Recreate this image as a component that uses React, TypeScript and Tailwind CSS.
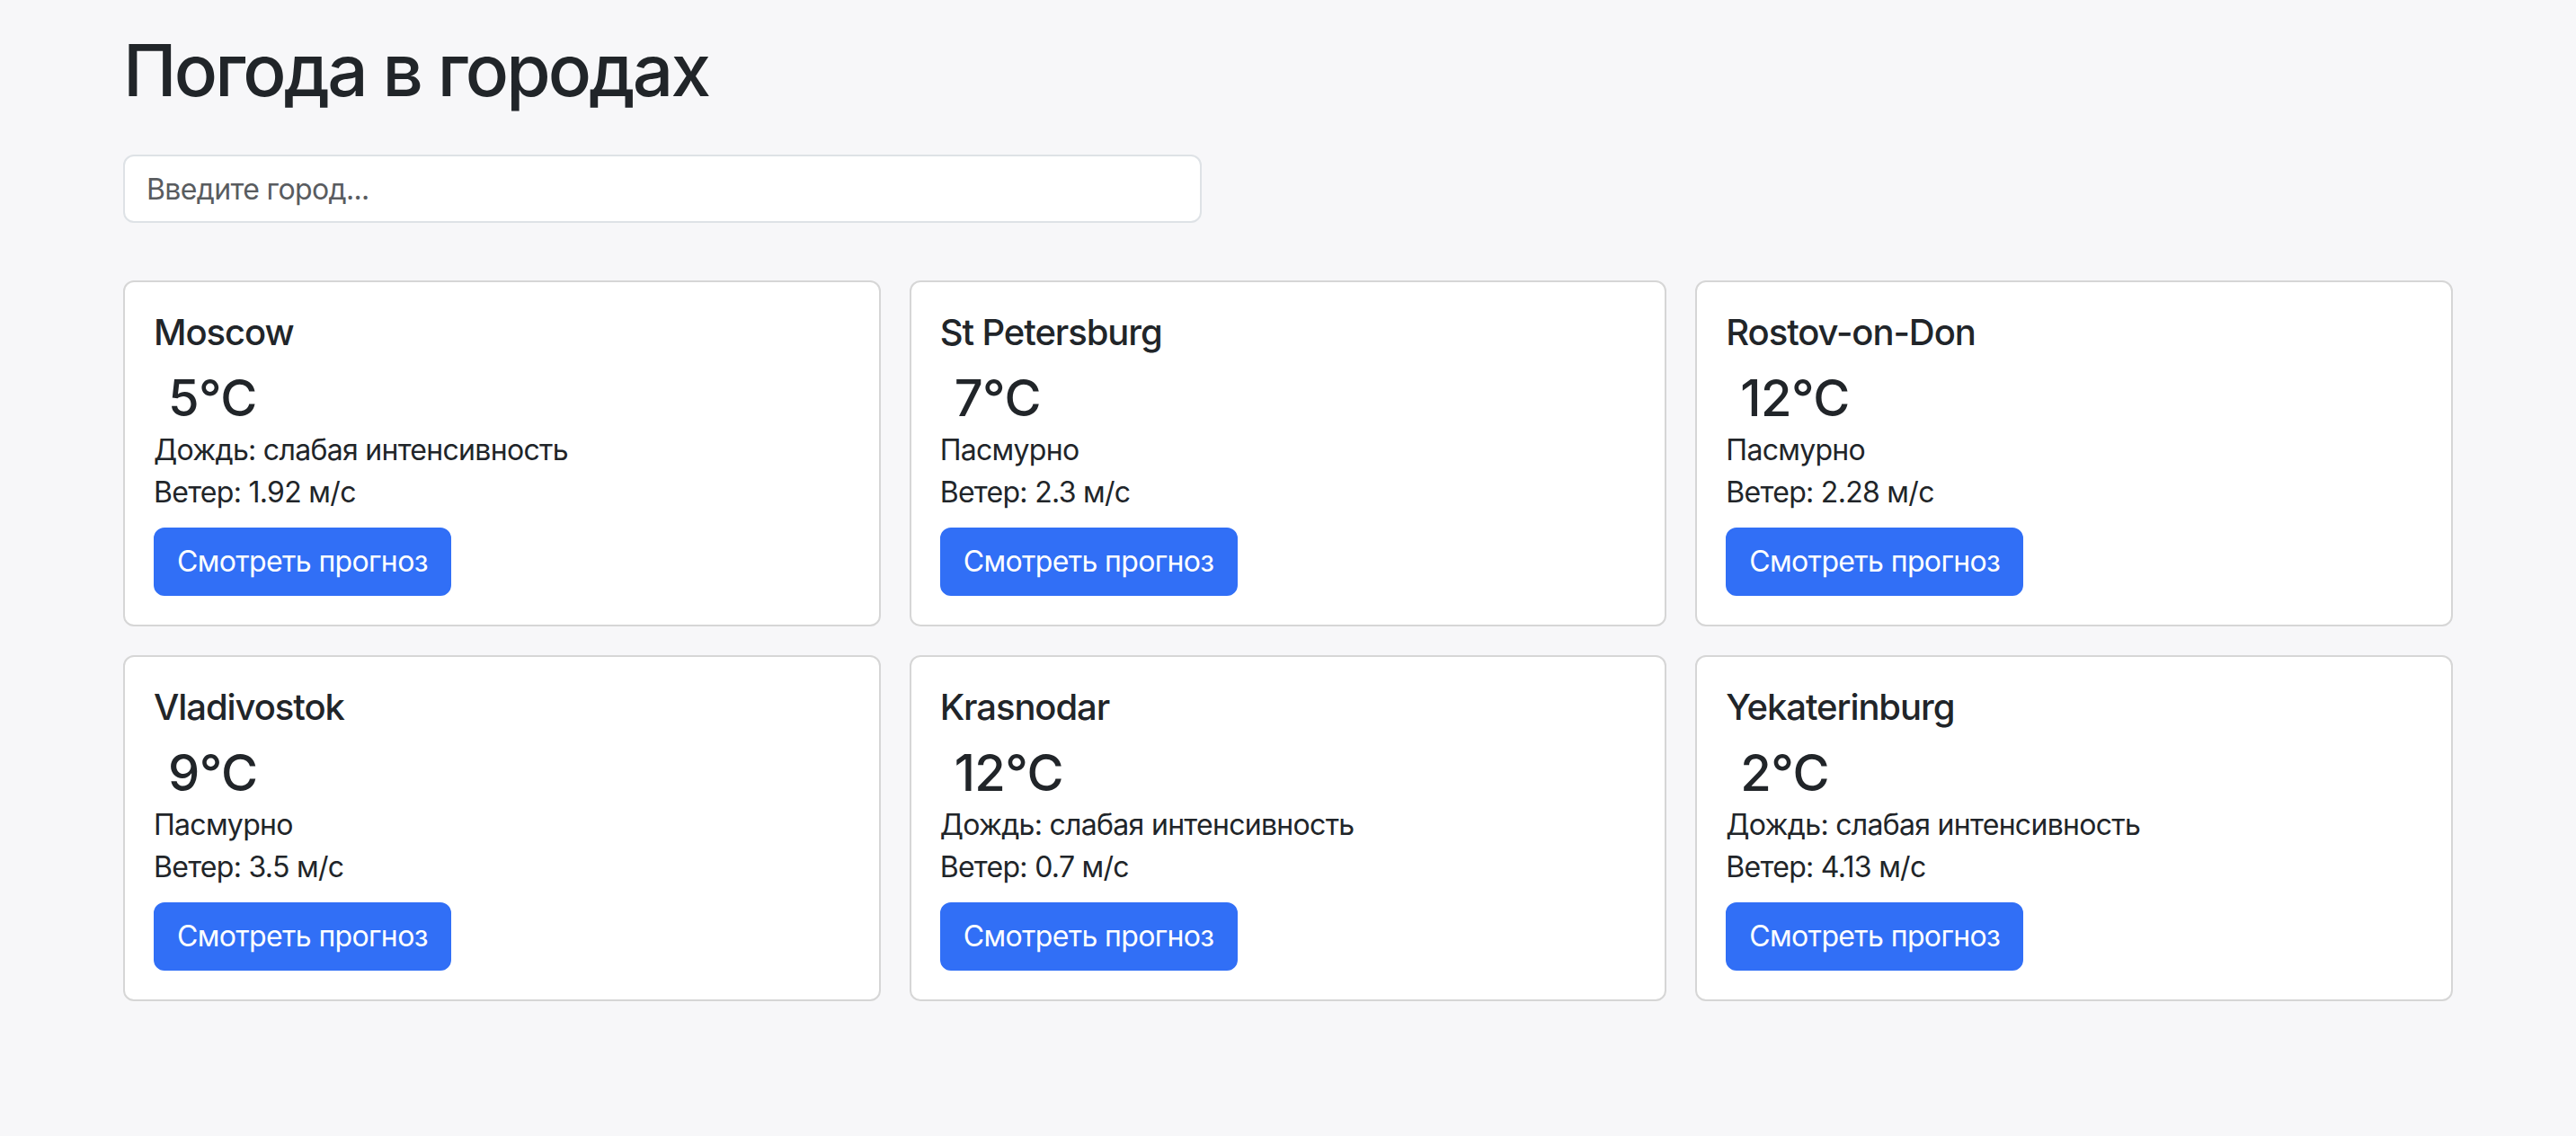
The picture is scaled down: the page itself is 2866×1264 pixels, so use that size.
import { useState } from "react";

const cities = [
  { name: "Moscow", temp: 5, desc: "Дождь: слабая интенсивность", wind: "1.92" },
  { name: "St Petersburg", temp: 7, desc: "Пасмурно", wind: "2.3" },
  { name: "Rostov-on-Don", temp: 12, desc: "Пасмурно", wind: "2.28" },
  { name: "Vladivostok", temp: 9, desc: "Пасмурно", wind: "3.5" },
  { name: "Krasnodar", temp: 12, desc: "Дождь: слабая интенсивность", wind: "0.7" },
  { name: "Yekaterinburg", temp: 2, desc: "Дождь: слабая интенсивность", wind: "4.13" },
];

function CityCard({ city }: { city: (typeof cities)[number] }) {
  return (
    <div className="bg-white border-2 border-[#d6d6d6] rounded-[12px] p-[32px]">
      <h5 className="text-[40px] leading-[48px] font-medium tracking-[-0.027em] mb-[16px]">{city.name}</h5>
      <h3 className="text-[56px] leading-[67px] font-medium tracking-[-0.01em] ml-[16px]">{city.temp}°C</h3>
      <p className="text-[32px] leading-[47px] tracking-[-0.022em]">{city.desc}</p>
      <p className="text-[32px] leading-[47px] tracking-[-0.022em]">Ветер: {city.wind} м/с</p>
      <button className="mt-[16px] bg-[#316ff6] text-white text-[32px] leading-[48px] tracking-[-0.02em] py-[12px] px-[24px] border-2 border-[#316ff6] rounded-[12px]">
        Смотреть прогноз
      </button>
    </div>
  );
}

export default function App() {
  const [search, setSearch] = useState("");
  const filtered = cities.filter((c) => c.name.toLowerCase().includes(search.toLowerCase()));

  return (
    <div className="min-h-screen bg-[#f7f7f9] text-[#212529] font-['Inter',sans-serif]">
      <div className="mx-auto w-[2640px] px-[24px] pt-[30px]">
        <h1 className="text-[80px] leading-[96px] font-medium tracking-[-0.035em]">Погода в городах</h1>
        <input
          type="text"
          placeholder="Введите город..."
          value={search}
          onChange={(e) => setSearch(e.target.value)}
          className="mt-[46px] block w-[1200px] h-[76px] bg-white border-2 border-[#dee2e6] rounded-[12px] px-[24px] text-[32px] tracking-[-0.02em] placeholder:text-[#595c5f] outline-none"
        />
        <div className="mt-[64px] grid grid-cols-3 gap-x-[32px] gap-y-[32px]">
          {filtered.map((c) => (
            <CityCard key={c.name} city={c} />
          ))}
        </div>
      </div>
    </div>
  );
}
